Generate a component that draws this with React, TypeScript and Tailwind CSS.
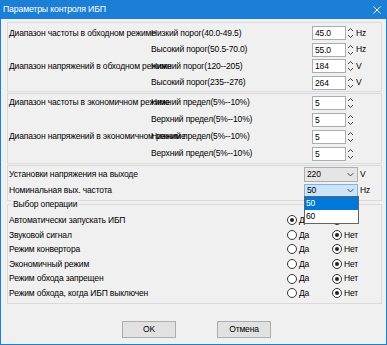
import React from 'react';

const Spin = () => (
  <svg width="7" height="14" viewBox="0 0 7 14" className="shrink-0">
    <path d="M1 5 L3.5 2.5 L6 5" fill="none" stroke="#444" strokeWidth="1" />
    <path d="M1 9 L3.5 11.5 L6 9" fill="none" stroke="#444" strokeWidth="1" />
  </svg>
);

const Chev = () => (
  <svg width="7" height="5" viewBox="0 0 7 5" className="shrink-0">
    <path d="M0.5 1 L3.5 4 L6.5 1" fill="none" stroke="#555" strokeWidth="1" />
  </svg>
);

function SpinRow({ label, sub, value, unit, h }: { label?: string; sub: string; value: string; unit?: string; h: string }) {
  return (
    <div className={`flex items-center ${h}`}>
      <div className="w-[142px] shrink-0 whitespace-nowrap">{label ?? ''}</div>
      <div className="w-[161px] shrink-0 whitespace-nowrap">{sub}</div>
      <div className="w-[34px] h-[14px] shrink-0 bg-white border border-[#abadb3] pl-[2px] leading-[12px]">{value}</div>
      <div className="ml-[1px]">
        <Spin />
      </div>
      {unit ? <div className="ml-[2px]">{unit}</div> : null}
    </div>
  );
}

function Radio({ on }: { on: boolean }) {
  return (
    <div className="w-[10px] h-[10px] rounded-full border border-[#333] bg-white flex items-center justify-center shrink-0">
      {on ? <div className="w-[4px] h-[4px] rounded-full bg-[#222]" /> : null}
    </div>
  );
}

function RadioRow({ label, yes }: { label: string; yes: boolean }) {
  return (
    <div className="flex items-center h-[14.6px]">
      <div className="w-[278px] shrink-0 whitespace-nowrap">{label}</div>
      <div className="w-[45px] flex items-center gap-[2px] shrink-0">
        <Radio on={yes} />
        <span>Да</span>
      </div>
      <div className="flex items-center gap-[2px]">
        <Radio on={!yes} />
        <span>Нет</span>
      </div>
    </div>
  );
}

export default function App() {
  return (
    <div className="w-[387px] h-[345px] bg-[#1c7fd6] flex flex-col font-['Liberation_Sans',Arial,sans-serif] text-[8.5px] tracking-[-0.15px] text-black">
      <div className="h-[19px] shrink-0 flex items-center justify-between pl-[3px] pr-[6px] text-white text-[8.7px]">
        <span>Параметры контроля ИБП</span>
        <svg width="8" height="8" viewBox="0 0 8 8">
          <path d="M0.5 0.5 L7.5 7.5 M7.5 0.5 L0.5 7.5" stroke="white" strokeWidth="1" />
        </svg>
      </div>
      <div className="flex-1 mx-[1px] mb-[1px] bg-[#f0f0f0] flex flex-col relative">
        <div className="ml-[6px] w-[375px] mt-[3px] border border-[#dadada] pl-[1px] pt-[2px]">
          <SpinRow h="h-[16.5px]" label="Диапазон частоты в обходном режиме" sub="Низкий порог(40.0-49.5)" value="45.0" unit="Hz" />
          <SpinRow h="h-[16.5px]" sub="Высокий порог(50.5-70.0)" value="55.0" unit="Hz" />
          <SpinRow h="h-[16.5px]" label="Диапазон напряжений в обходном режиме" sub="Нижний порог(120--205)" value="184" unit="V" />
          <SpinRow h="h-[16.5px]" sub="Высокий порог(235--276)" value="264" unit="V" />
        </div>
        <div className="ml-[6px] w-[375px] mt-[1px] border border-[#dadada] pl-[1px] pb-[1px]">
          <SpinRow h="h-[17px]" label="Диапазон частоты в экономичном режиме" sub="Нижний предел(5%--10%)" value="5" />
          <SpinRow h="h-[17px]" sub="Верхний предел(5%--10%)" value="5" />
          <SpinRow h="h-[17px]" label="Диапазон напряжений в экономичном режиме" sub="Нижний предел(5%--10%)" value="5" />
          <SpinRow h="h-[17px]" sub="Верхний предел(5%--10%)" value="5" />
        </div>
        <div className="ml-[6px] w-[375px] mt-[1px] border border-[#dadada] pl-[1px] h-[36px]">
          <div className="flex items-center h-[16px]">
            <div className="w-[295px] shrink-0">Установки напряжения на выходе</div>
            <div className="w-[54px] h-[15px] bg-[#e5e5e5] border border-[#adadad] flex items-center justify-between pl-[2px] pr-[3px]">
              <span>220</span>
              <Chev />
            </div>
            <div className="ml-[2px]">V</div>
          </div>
          <div className="flex items-center h-[17px]">
            <div className="w-[295px] shrink-0">Номинальная вых. частота</div>
            <div className="w-[54px] h-[14px] bg-[#cce4f7] border border-[#7eb4ea] flex items-center justify-between pl-[2px] pr-[3px]">
              <span>50</span>
              <Chev />
            </div>
            <div className="ml-[2px]">Hz</div>
          </div>
        </div>
        <div className="ml-[6px] w-[375px] mt-[3px] border border-[#dadada] pl-[1px] pt-[8px] pb-[2px] relative">
          <div className="absolute left-[4px] top-[-7px] bg-[#f0f0f0] px-[1px] leading-[12px]">Выбор операции</div>
          <RadioRow label="Автоматически запускать ИБП" yes={true} />
          <RadioRow label="Звуковой сигнал" yes={false} />
          <RadioRow label="Режим конвертора" yes={false} />
          <RadioRow label="Экономичный режим" yes={false} />
          <RadioRow label="Режим обхода запрещен" yes={false} />
          <RadioRow label="Режим обхода, когда ИБП выключен" yes={false} />
        </div>
        <div className="flex justify-center gap-[41px] mt-[17px] pl-[6px]">
          <button className="w-[54px] h-[17px] bg-[#e1e1e1] border border-[#adadad] leading-[15px]">OK</button>
          <button className="w-[54px] h-[17px] bg-[#e1e1e1] border border-[#adadad] leading-[15px]">Отмена</button>
        </div>
        <div className="absolute left-[303px] top-[177px] w-[55px] border border-[#646464] bg-white">
          <div className="h-[13px] bg-[#0078d7] text-white pl-[1px] leading-[13px]">50</div>
          <div className="h-[13px] pl-[1px] leading-[13px]">60</div>
        </div>
      </div>
    </div>
  );
}
